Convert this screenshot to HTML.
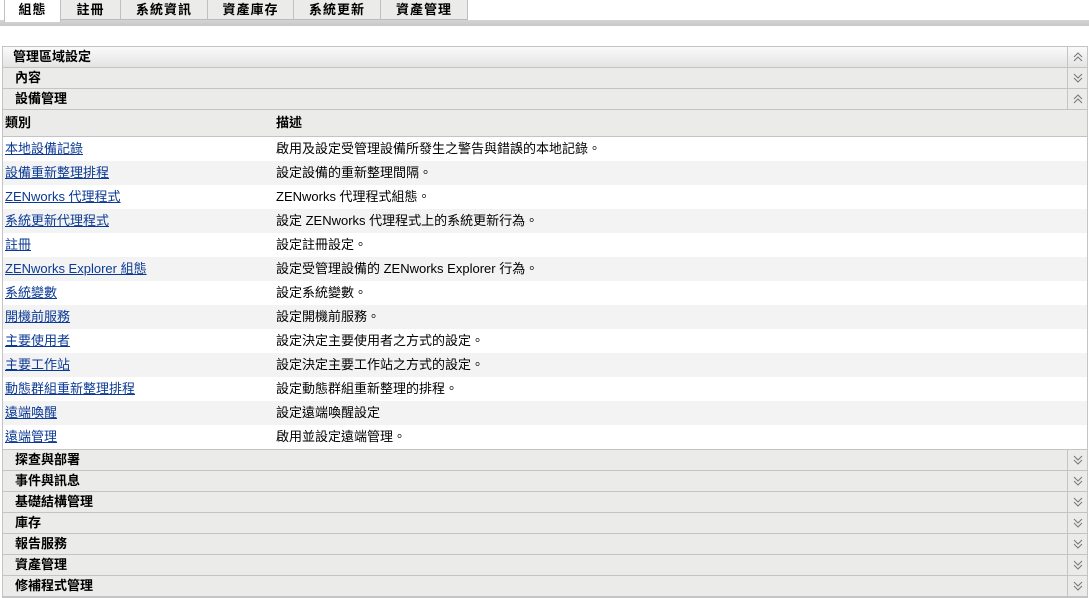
<!DOCTYPE html>
<html><head><meta charset="utf-8"><style>
*{margin:0;padding:0;box-sizing:border-box}
body{width:1089px;height:597px;background:#fff;font-family:"Liberation Sans","Noto Sans CJK TC",sans-serif;font-size:13px;color:#000;position:relative;overflow:hidden}
.tabs{position:absolute;left:0;top:0;width:1089px;height:26px;background:linear-gradient(#fff 0,#fff 20px,#d4d4d4 20px,#c8c8c8 26px)}
.tab{position:absolute;top:0;height:20px;background:#ebebea;border-right:1px solid #c0c0c0;border-bottom:1px solid #bbb;font-weight:bold;text-align:center;line-height:19px;font-size:13px;letter-spacing:1px}
.tab.sel{background:#fff;border-bottom:none;height:22px}
.panel{position:absolute;left:2px;top:46px;width:1086px;border:1px solid #c4c4c4}
.sec{height:21px;background:#ebebea;border-bottom:1px solid #c4c4c4;font-weight:bold;line-height:20px;padding-left:12px;position:relative}
.sec.top{background:linear-gradient(#fafafa,#e4e4e4);padding-left:10px}
.ic{position:absolute;right:0;top:0;width:20px;height:100%;border-left:1px solid #c4c4c4}
.ic svg{position:absolute;left:5px;top:5px}
.hdr{height:27px;background:#ebebea;border-bottom:1px solid #c4c4c4;font-weight:bold;line-height:26px;position:relative}
.row{height:24px;line-height:24px;position:relative}
.row:nth-child(even){background:#f3f3f3}
.c1{position:absolute;left:2px}
.c2{position:absolute;left:273px}
a{color:#0b3a94;text-decoration:underline}
</style></head><body>
<div class="tabs">
<div class="tab sel" style="left:4px;width:57px;border-left:1px solid #c0c0c0">組態</div>
<div class="tab" style="left:61px;width:60px">註冊</div>
<div class="tab" style="left:121px;width:87px">系統資訊</div>
<div class="tab" style="left:208px;width:86px">資產庫存</div>
<div class="tab" style="left:294px;width:87px">系統更新</div>
<div class="tab" style="left:381px;width:87px">資產管理</div>
</div>
<div class="panel">
<div class="sec top">管理區域設定<div class="ic"><svg width="10" height="10"><path d="M1 5L5 1L9 5M1 9L5 5L9 9" fill="none" stroke="#777"/></svg></div></div>
<div class="sec">內容<div class="ic"><svg width="10" height="10"><path d="M1 1L5 5L9 1M1 5L5 9L9 5" fill="none" stroke="#777"/></svg></div></div>
<div class="sec">設備管理<div class="ic"><svg width="10" height="10"><path d="M1 5L5 1L9 5M1 9L5 5L9 9" fill="none" stroke="#777"/></svg></div></div>
<div class="hdr"><span class="c1">類別</span><span class="c2">描述</span></div>
<div>
<div class="row"><span class="c1"><a>本地設備記錄</a></span><span class="c2">啟用及設定受管理設備所發生之警告與錯誤的本地記錄。</span></div>
<div class="row"><span class="c1"><a>設備重新整理排程</a></span><span class="c2">設定設備的重新整理間隔。</span></div>
<div class="row"><span class="c1"><a>ZENworks 代理程式</a></span><span class="c2">ZENworks 代理程式組態。</span></div>
<div class="row"><span class="c1"><a>系統更新代理程式</a></span><span class="c2">設定 ZENworks 代理程式上的系統更新行為。</span></div>
<div class="row"><span class="c1"><a>註冊</a></span><span class="c2">設定註冊設定。</span></div>
<div class="row"><span class="c1"><a>ZENworks Explorer 組態</a></span><span class="c2">設定受管理設備的 ZENworks Explorer 行為。</span></div>
<div class="row"><span class="c1"><a>系統變數</a></span><span class="c2">設定系統變數。</span></div>
<div class="row"><span class="c1"><a>開機前服務</a></span><span class="c2">設定開機前服務。</span></div>
<div class="row"><span class="c1"><a>主要使用者</a></span><span class="c2">設定決定主要使用者之方式的設定。</span></div>
<div class="row"><span class="c1"><a>主要工作站</a></span><span class="c2">設定決定主要工作站之方式的設定。</span></div>
<div class="row"><span class="c1"><a>動態群組重新整理排程</a></span><span class="c2">設定動態群組重新整理的排程。</span></div>
<div class="row"><span class="c1"><a>遠端喚醒</a></span><span class="c2">設定遠端喚醒設定</span></div>
<div class="row" style="border-bottom:1px solid #c4c4c4;height:25px"><span class="c1"><a>遠端管理</a></span><span class="c2">啟用並設定遠端管理。</span></div>
</div>
<div class="sec">探查與部署<div class="ic"><svg width="10" height="10"><path d="M1 1L5 5L9 1M1 5L5 9L9 5" fill="none" stroke="#777"/></svg></div></div>
<div class="sec">事件與訊息<div class="ic"><svg width="10" height="10"><path d="M1 1L5 5L9 1M1 5L5 9L9 5" fill="none" stroke="#777"/></svg></div></div>
<div class="sec">基礎結構管理<div class="ic"><svg width="10" height="10"><path d="M1 1L5 5L9 1M1 5L5 9L9 5" fill="none" stroke="#777"/></svg></div></div>
<div class="sec">庫存<div class="ic"><svg width="10" height="10"><path d="M1 1L5 5L9 1M1 5L5 9L9 5" fill="none" stroke="#777"/></svg></div></div>
<div class="sec">報告服務<div class="ic"><svg width="10" height="10"><path d="M1 1L5 5L9 1M1 5L5 9L9 5" fill="none" stroke="#777"/></svg></div></div>
<div class="sec">資產管理<div class="ic"><svg width="10" height="10"><path d="M1 1L5 5L9 1M1 5L5 9L9 5" fill="none" stroke="#777"/></svg></div></div>
<div class="sec">修補程式管理<div class="ic"><svg width="10" height="10"><path d="M1 1L5 5L9 1M1 5L5 9L9 5" fill="none" stroke="#777"/></svg></div></div>
</div>
</body></html>
